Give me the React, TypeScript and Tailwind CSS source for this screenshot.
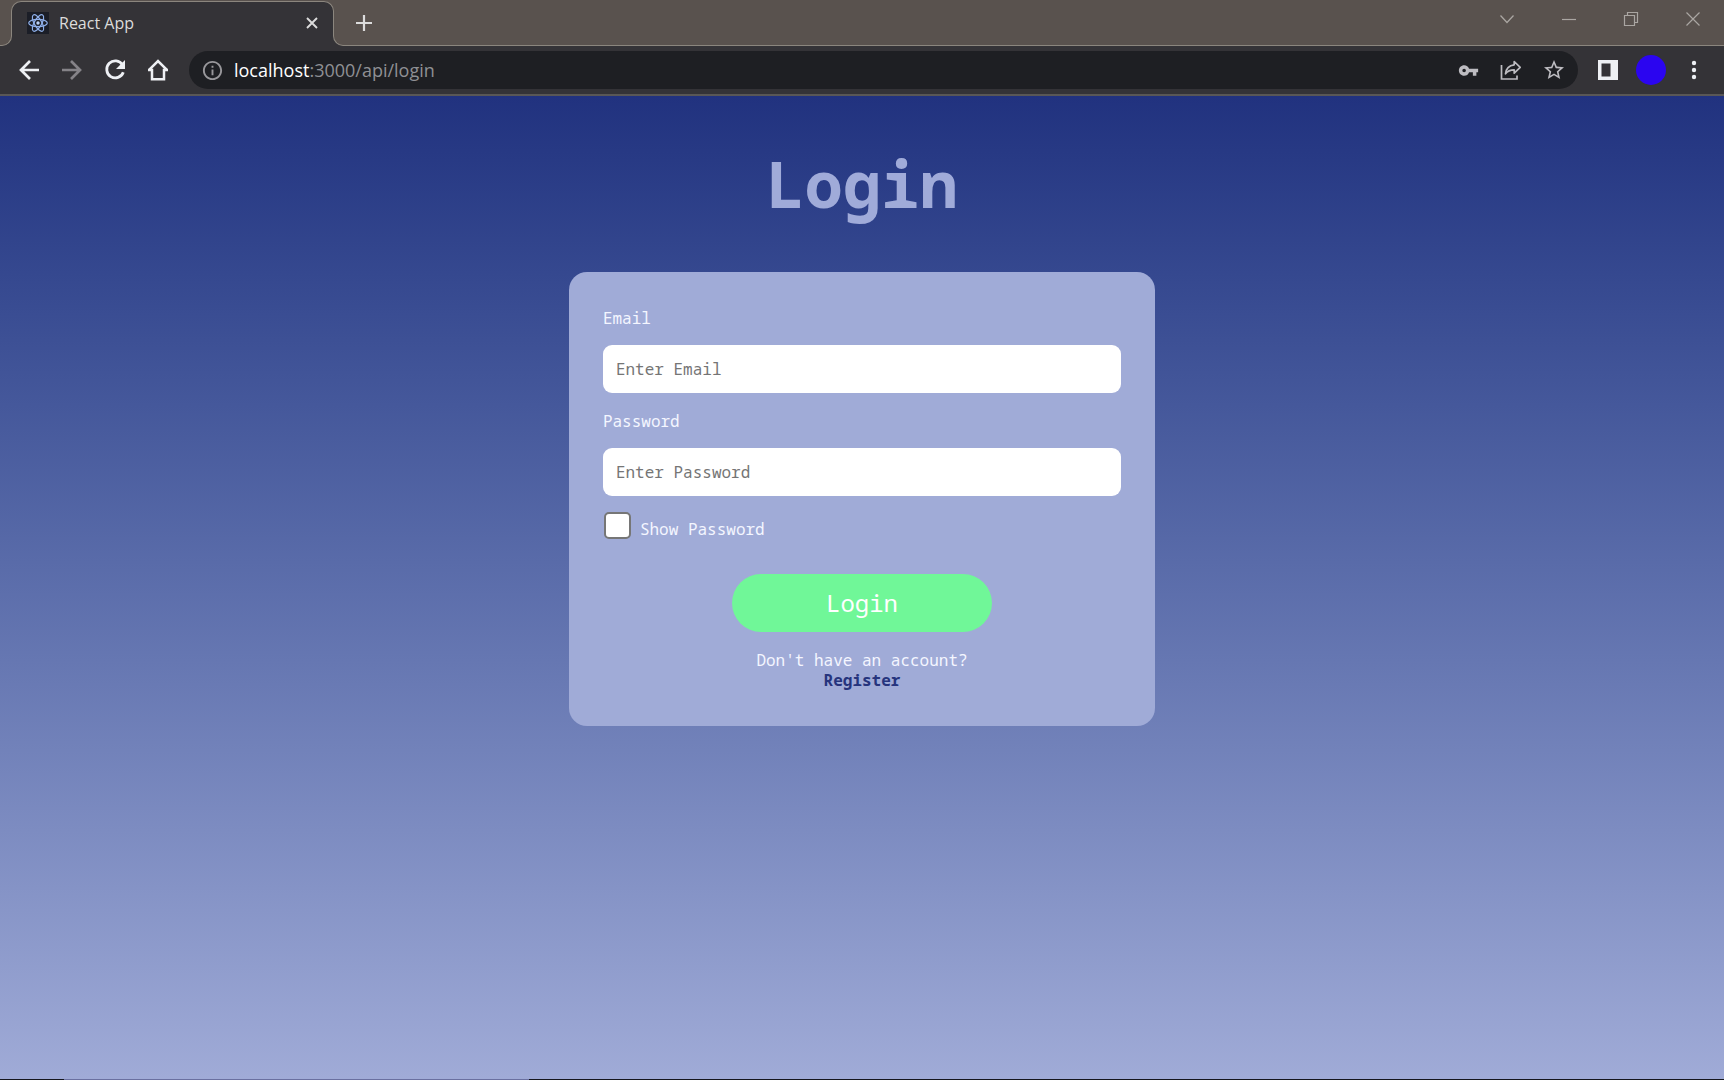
import { useState } from "react";
import type { ReactNode } from "react";
import { MdInfoOutline, MdStarBorder, MdVpnKey } from "react-icons/md";

function ReactLogo() {
  return (
    <svg viewBox="0 0 22 22" className="size-[22px] shrink-0 bg-[#1b1e27]" fill="none" stroke="#8fb0ea" strokeWidth="1.2">
      <ellipse cx="11" cy="11" rx="9.3" ry="3.7" />
      <ellipse cx="11" cy="11" rx="9.3" ry="3.7" transform="rotate(60 11 11)" />
      <ellipse cx="11" cy="11" rx="9.3" ry="3.7" transform="rotate(120 11 11)" />
      <circle cx="11" cy="11" r="1.7" fill="#b9d0f5" stroke="none" />
    </svg>
  );
}

function IconButton({ label, className = "", children }: { label: string; className?: string; children?: ReactNode }) {
  return (
    <button type="button" aria-label={label} className={`flex shrink-0 items-center justify-center ${className}`}>
      {children}
    </button>
  );
}

function TabStrip() {
  return (
    <div className="flex h-[46px] bg-[#59524e] text-[#dcdcdc]">
      <div className="flex w-3 flex-col bg-[#343337]">
        <div className="flex-1 bg-[#59524e]" />
        <div className="h-3 rounded-br-[10px] border-r border-b border-[#8b867e] bg-[#59524e]" />
      </div>
      <div className="relative flex w-[321px] items-center bg-[#59524e]">
        <div className="absolute inset-x-0 top-px bottom-0 rounded-t-[10px] bg-[#343337]" />
        <div className="pointer-events-none absolute -inset-x-px top-px bottom-3 rounded-t-[10px] border-x border-t border-[#8b867e]" />
        <button type="button" role="tab" aria-selected="true" className="relative flex flex-1 items-center gap-[10px] pl-[15px] font-['Open_Sans',sans-serif] text-base leading-5">
          <ReactLogo />
          React App
        </button>
        <IconButton label="Close tab" className="relative mr-[11px] size-5">
          <svg viewBox="0 0 12 12" className="size-3" stroke="currentColor" strokeWidth="1.9">
            <path d="M1 1l10 10M11 1L1 11" />
          </svg>
        </IconButton>
      </div>
      <div className="flex w-3 flex-col bg-[#343337]">
        <div className="flex-1 bg-[#59524e]" />
        <div className="h-3 rounded-bl-[10px] border-b border-l border-[#8b867e] bg-[#59524e]" />
      </div>
      <div className="flex flex-1 items-center justify-between border-b border-[#8b867e] pl-[11px]">
        <IconButton label="New tab" className="size-4">
          <svg viewBox="0 0 16 16" className="size-4" stroke="currentColor" strokeWidth="2.2">
            <path d="M8 0v16M0 8h16" />
          </svg>
        </IconButton>
        <div className="mr-[23px] mb-[7px] flex gap-[46px] text-[#aaa6a2]">
          <IconButton label="Search tabs" className="size-4">
            <svg viewBox="0 0 16 16" className="size-4" fill="none" stroke="currentColor" strokeWidth="1.3">
              <path d="M1.5 4.500L8 11.500l6.500-7" />
            </svg>
          </IconButton>
          <IconButton label="Minimize" className="size-4">
            <svg viewBox="0 0 16 16" className="size-4" fill="none" stroke="currentColor" strokeWidth="1.2">
              <path d="M1 8.500h14" />
            </svg>
          </IconButton>
          <IconButton label="Restore" className="size-4">
            <svg viewBox="0 0 16 16" className="size-4" fill="none" stroke="currentColor" strokeWidth="1.2">
              <path d="M1.500 4.500h10v10h-10zM4.500 4.500v-3h10v10h-3" />
            </svg>
          </IconButton>
          <IconButton label="Close window" className="size-4">
            <svg viewBox="0 0 16 16" className="size-4" fill="none" stroke="currentColor" strokeWidth="1.2">
              <path d="M1.500 1.500l13 13M14.500 1.500l-13 13" />
            </svg>
          </IconButton>
        </div>
      </div>
    </div>
  );
}

function Toolbar() {
  return (
    <div className="flex h-[50px] items-center border-b-2 border-[#595756] bg-[#343337] text-[#eef0f4]">
      <div className="ml-[15px] flex gap-[15px]">
        <IconButton label="Back" className="size-7">
          <svg viewBox="0 0 28 28" className="size-7" fill="none" stroke="currentColor" strokeWidth="2.7">
            <path d="M24 14H6.500M15 5l-9 9 9 9" />
          </svg>
        </IconButton>
        <IconButton label="Forward" className="size-7 text-[#858388]">
          <svg viewBox="0 0 28 28" className="size-7" fill="none" stroke="currentColor" strokeWidth="2.7">
            <path d="M4 14h17.500M13 5l9 9-9 9" />
          </svg>
        </IconButton>
        <IconButton label="Reload" className="size-7">
          <svg viewBox="0 0 28 28" className="size-7" fill="none" stroke="currentColor" strokeWidth="2.8">
            <path d="M21.500 8.900A8.500 8.500 0 1 0 22.300 16.200" />
            <path d="M24 4v9h-9z" fill="currentColor" stroke="none" />
          </svg>
        </IconButton>
        <IconButton label="Home" className="size-7">
          <svg viewBox="0 0 28 28" className="size-7" fill="none" stroke="currentColor" strokeWidth="2.500">
            <path d="M4.800 14.200L14 5l9.200 9.200M4 14h4v9.300h12V14h4" />
          </svg>
        </IconButton>
      </div>
      <div className="ml-[17px] flex h-[38px] flex-1 items-center rounded-full bg-[#1e1f23] pr-3 pl-[11px] text-[#bdbcc1]">
        <IconButton label="View site information" className="size-6 text-[#98979b]">
          <MdInfoOutline size={23} />
        </IconButton>
        <div role="textbox" aria-label="Address" tabIndex={0} className="ml-[10px] flex-1 font-['Open_Sans',sans-serif] text-[18px] leading-6 text-[#8f9094]">
          <span className="text-white">localhost</span>:3000/api/login
        </div>
        <div className="flex gap-[19px]">
          <IconButton label="Saved passwords" className="size-6">
            <MdVpnKey size={21} />
          </IconButton>
          <IconButton label="Share" className="size-6">
            <svg viewBox="0 0 24 24" className="size-6" fill="none" stroke="currentColor" strokeWidth="1.700">
              <path d="M2.500 7v14h15.500v-3.500" />
              <path d="M15.200 3.500l6 5.800-6 5.900v-3.400c-4 0-6.800 1.200-8.700 4 .5-4.800 3.200-8.400 8.700-9z" strokeLinejoin="round" />
            </svg>
          </IconButton>
          <IconButton label="Bookmark this page" className="size-6">
            <MdStarBorder size={24} />
          </IconButton>
        </div>
      </div>
      <IconButton label="Side panel" className="ml-5 size-5">
        <svg viewBox="0 0 20 20" className="size-5">
          <path fill="currentColor" fillRule="evenodd" d="M0 0h20v20H0zM3.500 3.500v13h9v-13z" />
        </svg>
      </IconButton>
      <IconButton label="Profile" className="ml-[18px] size-[30px] rounded-full bg-[#2b05f0]" />
      <IconButton label="Menu" className="mr-5 ml-[18px] size-5">
        <svg viewBox="0 0 20 20" className="size-5" fill="currentColor">
          <circle cx="10" cy="3" r="2.200" />
          <circle cx="10" cy="10" r="2.200" />
          <circle cx="10" cy="17" r="2.200" />
        </svg>
      </IconButton>
    </div>
  );
}

function Field({ id, label, type, className = "" }: { id: string; label: string; type: string; className?: string }) {
  return (
    <div className={`flex flex-col gap-[17px] ${className}`}>
      <label htmlFor={id}>{label}</label>
      <input
        id={id}
        type={type}
        placeholder={`Enter ${label}`}
        className="h-12 w-full rounded-[9px] bg-white px-[13px] text-[#333] outline-none placeholder:text-[#757575]"
      />
    </div>
  );
}

export default function App() {
  const [show, setShow] = useState(false);
  return (
    <div className="flex min-h-screen flex-col">
      <header>
        <TabStrip />
        <Toolbar />
      </header>
      <main className="flex flex-1 flex-col items-center bg-linear-to-b from-[#21327f] to-[#a0abd7] pt-14 font-['Noto_Sans_Mono','DejaVu_Sans_Mono',monospace] text-base leading-5 text-[#f4f6ff]">
        <h1 className="text-[64px] leading-none font-bold text-[#a0abd9]">Login</h1>
        <form onSubmit={(e) => e.preventDefault()} className="mt-14 flex w-[34%] min-w-96 flex-col rounded-[18px] bg-[#a0abd7] px-[34px] py-9">
          <Field id="email" label="Email" type="email" />
          <Field id="password" label="Password" type={show ? "text" : "password"} className="mt-[18px]" />
          <div className="mt-4 flex items-end gap-[9px] pl-px">
            <input
              id="show"
              type="checkbox"
              checked={show}
              onChange={(e) => setShow(e.target.checked)}
              className="size-[27px] appearance-none rounded-[5px] border-2 border-[#767676] bg-white checked:bg-[#21327f]"
            />
            <label htmlFor="show">Show Password</label>
          </div>
          <button type="submit" className="mt-[35px] h-[58px] w-1/2 self-center rounded-full bg-[#70f798] text-2xl text-white">
            Login
          </button>
          <p className="mt-[18px] text-center">
            Don't have an account?
            <br />
            <a href="#register" className="font-bold text-[#26347d]">
              Register
            </a>
          </p>
        </form>
      </main>
      <footer className="flex h-px bg-[#15161d]">
        <div className="ml-16 w-[27%] bg-[#6a70a0]" />
      </footer>
    </div>
  );
}
